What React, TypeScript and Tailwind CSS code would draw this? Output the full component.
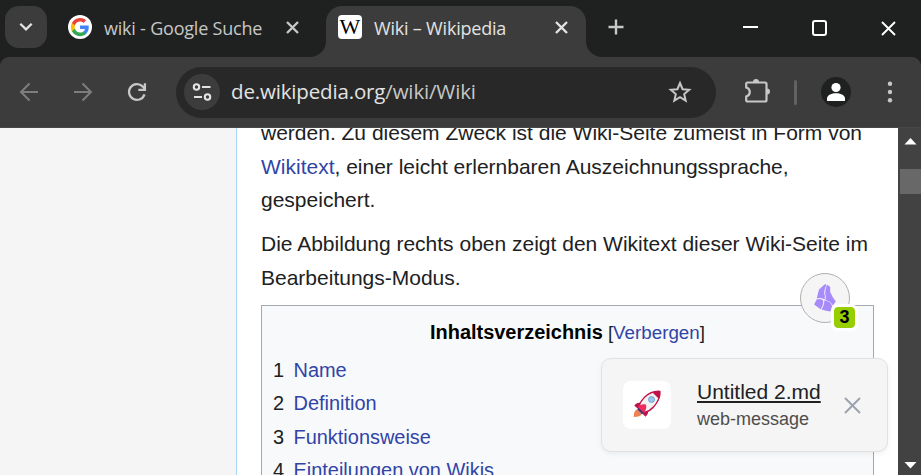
import React from 'react';

const chromeFont = "font-['Open_Sans','Noto_Sans',sans-serif]";

function CloseGlyph({ size, color, width }: { size: number; color: string; width: number }) {
  return (
    <svg width={size} height={size} viewBox={`0 0 ${size} ${size}`} className="shrink-0" fill="none" stroke={color} strokeWidth={width}>
      <path d={`M1 1L${size - 1} ${size - 1}M${size - 1} 1L1 ${size - 1}`} />
    </svg>
  );
}

function GoogleIcon() {
  return (
    <svg width="24" height="24" viewBox="0 0 24 24" className="shrink-0">
      <circle cx="12" cy="12" r="12" fill="#fff" />
      <g transform="translate(2.9 2.9) scale(0.76)">
        <path fill="#4285f4" d="M23.5 12.3c0-.9-.1-1.500-.2-2.300H12v4.500h6.500c-.3 1.500-1.200 2.800-2.500 3.600v3h3.900c2.300-2.100 3.600-5.200 3.600-8.800z" />
        <path fill="#34a853" d="M12 24c3.200 0 6-1.100 7.900-2.900l-3.900-3c-1.100.7-2.400 1.200-4 1.200-3.100 0-5.800-2.100-6.700-4.900H1.300v3.100C3.300 21.400 7.300 24 12 24z" />
        <path fill="#fbbc05" d="M5.300 14.400a7.200 7.200 0 0 1 0-4.700V6.600h-4a12 12 0 0 0 0 10.900z" />
        <path fill="#ea4335" d="M12 4.800c1.800 0 3.300.6 4.600 1.800L20 3.200A12 12 0 0 0 1.300 6.600l4 3.100C6.200 6.900 8.900 4.800 12 4.800z" />
      </g>
    </svg>
  );
}

function TabStrip() {
  return (
    <div className="flex h-[57px] items-start bg-[#1f2120]">
      <button className="ml-[5px] mt-[6px] flex h-[42px] w-[42px] shrink-0 items-center justify-center rounded-[14px] bg-[#3c3c3c]">
        <svg width="14" height="10" viewBox="0 0 14 10" fill="none" stroke="#e3e3e3" strokeWidth="2.3">
          <path d="M1.300 1.800L7 7.400L12.700 1.800" />
        </svg>
      </button>
      <div className="ml-[21px] mt-[6px] flex h-[42px] w-[242px] shrink-0 items-center text-[#c7c7c7]">
        <GoogleIcon />
        <span className="ml-3 mt-[3px] w-[182px] whitespace-nowrap text-[18px] tracking-[-0.21px]">wiki - Google Suche</span>
        <CloseGlyph size={13} color="#c7c7c7" width={2.4} />
      </div>
      <svg width="16" height="16" viewBox="0 0 16 16" className="mt-[41px] shrink-0" fill="#3c3c3c">
        <path d="M0 16A16 16 0 0 0 16 0V16Z" />
      </svg>
      <div className="mt-[6px] flex h-[51px] w-[260px] shrink-0 items-start rounded-t-[16px] bg-[#3c3c3c] pl-3 text-[#e3e3e3]">
        <div className="flex h-[42px] items-center">
          <span className="flex h-6 w-6 shrink-0 items-center justify-center overflow-hidden rounded-[4px] bg-white font-['Liberation_Serif',serif] text-[22px] leading-6 text-black">
            W
          </span>
          <span className="ml-3 mt-[3px] w-[181px] whitespace-nowrap text-[18px] tracking-[-0.2px]">Wiki – Wikipedia</span>
          <CloseGlyph size={13} color="#e3e3e3" width={2.4} />
        </div>
      </div>
      <svg width="16" height="16" viewBox="0 0 16 16" className="mt-[41px] shrink-0" fill="#3c3c3c">
        <path d="M16 16A16 16 0 0 1 0 0V16Z" />
      </svg>
      <svg width="16" height="16" viewBox="0 0 16 16" className="ml-[6px] mt-[19px] shrink-0" stroke="#c7c7c7" strokeWidth="2.4">
        <path d="M8 .5V15.500M.5 8H15.500" />
      </svg>
      <span className="ml-[119px] mt-[26px] h-[2px] w-[15px] shrink-0 bg-white" />
      <span className="ml-[54px] mt-[20px] h-[16px] w-[15px] shrink-0 rounded-[3px] border-2 border-white" />
      <div className="ml-[54px] mt-[21px]">
        <CloseGlyph size={15} color="#fff" width={1.9} />
      </div>
    </div>
  );
}

function Toolbar() {
  return (
    <div className="bg-[#1f2120]">
      <div className="flex h-[71px] items-center rounded-t-[9px] border-b border-[#4a4747] bg-[#3c3c3c]">
        <svg width="20" height="20" viewBox="0 0 20 20" className="ml-[19px] shrink-0" fill="none" stroke="#7d7d7d" strokeWidth="2">
          <path d="M19 10H2.500M10.500 1.500L2 10L10.500 18.500" />
        </svg>
        <svg width="20" height="20" viewBox="0 0 20 20" className="ml-[34px] shrink-0" fill="none" stroke="#7d7d7d" strokeWidth="2">
          <path d="M1 10H17.500M9.500 1.500L18 10L9.500 18.500" />
        </svg>
        <svg width="20" height="20" viewBox="0 0 20 20" className="ml-[34px] shrink-0" fill="none" stroke="#c7c7c7" strokeWidth="2.3">
          <path d="M17.500 12.300A7.900 7.900 0 1 1 15.600 4.400L17.800 6.800" />
          <path d="M17.900 1.300V7.800H11.300" />
        </svg>
        <div className="ml-[29px] flex h-[51px] w-[540px] shrink-0 items-center rounded-full bg-[#282828] pl-2">
          <span className="flex h-9 w-9 shrink-0 items-center justify-center rounded-full bg-[#3c3c3c]">
            <svg width="20" height="20" viewBox="0 0 20 20" fill="none" stroke="#e3e3e3" strokeWidth="2.100">
              <circle cx="4.500" cy="5" r="2.700" />
              <path d="M10 5H18.500M2 15H10" />
              <circle cx="15.500" cy="15" r="2.700" />
            </svg>
          </span>
          <span className="-mt-[2px] ml-[11px] w-[437px] whitespace-nowrap text-[20.5px] tracking-[-0.16px] text-[#e3e3e3]">
            de.wikipedia.org<span className="text-[#c7c7c7]">/wiki/Wiki</span>
          </span>
          <svg width="24" height="24" viewBox="0 0 24 24" className="shrink-0" fill="none" stroke="#c7c7c7" strokeWidth="2">
            <path d="M12 3L14.600 9.200L21.200 9.700L16.200 14.100L17.700 20.700L12 17.200L6.300 20.700L7.800 14.100L2.800 9.700L9.400 9.200Z" />
          </svg>
        </div>
        <svg width="26" height="26" viewBox="0 0 26 26" className="-mt-[2px] ml-[28px] shrink-0" fill="none">
          <path d="M3.500 4.500H21A1.500 1.500 0 0 1 22.500 6V22A1.500 1.500 0 0 1 21 23.500H3.500A1.300 1.300 0 0 1 2.200 22.200V18.500C7 17 7 11 2.200 9.500V6A1.400 1.400 0 0 1 3.500 4.500Z" stroke="#c7c7c7" strokeWidth="2.200" />
          <path d="M9 4A3 3 0 0 1 15 4ZM23 10.500A3 3 0 0 1 23 16.500Z" fill="#c7c7c7" />
        </svg>
        <span className="ml-[24px] h-[25px] w-[3px] shrink-0 rounded-full bg-[#626262]" />
        <svg width="30" height="30" viewBox="0 0 30 30" className="ml-[24px] shrink-0">
          <circle cx="15" cy="15" r="15" fill="#1f2120" />
          <circle cx="15" cy="10.500" r="4.600" fill="#fff" />
          <path d="M6 24V21.500C6 18 11 16.300 15 16.300S24 18 24 21.500V24Z" fill="#fff" />
        </svg>
        <svg width="6" height="24" viewBox="0 0 6 24" className="ml-[36px] shrink-0" fill="#c7c7c7">
          <circle cx="3" cy="3.700" r="2.200" />
          <circle cx="3" cy="12" r="2.200" />
          <circle cx="3" cy="20.300" r="2.200" />
        </svg>
      </div>
    </div>
  );
}

const chapters = ['Name', 'Definition', 'Funktionsweise', 'Einteilungen von Wikis'];

function Article() {
  return (
    <main className="h-[347px] w-[662px] shrink-0 overflow-hidden border-l border-[#a7d7f9] bg-white pl-6 text-[21px] leading-[33.6px] text-[#202122]">
      <div className="-mt-[12px] whitespace-nowrap">
        <p>
          werden. Zu diesem Zweck ist die Wiki-Seite zumeist in Form von
          <br />
          <a className="text-[#3044a8]">Wikitext</a>, einer leicht erlernbaren Auszeichnungssprache,
          <br />
          gespeichert.
        </p>
        <p className="mt-[10.5px]">
          Die Abbildung rechts oben zeigt den Wikitext dieser Wiki-Seite im
          <br />
          Bearbeitungs-Modus.
        </p>
      </div>
      <section className="mt-[10.5px] h-[300px] w-[613px] border border-[#a2a9b1] bg-[#f8f9fa] pl-[11px] pt-[10px] text-[19.95px]">
        <h2 className="pr-[11px] text-center leading-[32px]">
          <b className="text-black">Inhaltsverzeichnis</b>
          <span className="ml-[5px] text-[18.8px]">
            [<a className="text-[#3044a8]">Verbergen</a>]
          </span>
        </h2>
        <ol className="mt-[5px]">
          {chapters.map((c, i) => (
            <li key={c} className="flex h-[33.500px] items-center">
              <span className="w-[20.5px]">{i + 1}</span>
              <a className="text-[#3044a8]">{c}</a>
            </li>
          ))}
        </ol>
      </section>
    </main>
  );
}

function Scrollbar() {
  return (
    <div className="flex h-[347px] w-[23px] flex-col items-end bg-[#424242]">
      <svg width="21" height="41" viewBox="0 0 21 41" fill="#fff">
        <path d="M4.500 16.500L10.500 10L16.500 16.500Z" />
      </svg>
      <span className="h-[25px] w-[21px] bg-[#686868]" />
      <svg width="21" height="20" viewBox="0 0 21 20" fill="#fff" className="mt-auto">
        <path d="M4.500 7L10.500 13.500L16.500 7Z" />
      </svg>
    </div>
  );
}

function VaultButton() {
  return (
    <div className="absolute left-[800px] top-[273px] flex h-[50px] w-[50px] items-center justify-center rounded-full border border-[#b0b0b0] bg-[#f5f5f5]">
      <svg width="22" height="28" viewBox="0 0 22 28" className="-mt-px" fill="#a78bfa">
        <path d="M5 5.600L10.500 .6Q12.300 -.4 12.200 1.200Q10 5.500 10.300 9.500Q11.300 12.500 10.500 15.500Q7 13.500 2.800 14.400Q3.800 10 5 5.600Z" />
        <path d="M13 .6L16.200 3V8Q18 12.500 21.800 17.500L18.800 21.600Q16.500 16.800 11.300 15.900Q12.300 12.500 11.200 9.500Q11 5.500 13 .6Z" />
        <path d="M2.600 15.400Q8 14.200 9.200 16.800Q9.700 20.500 6.600 25.200L.1 20.500Z" />
        <path d="M10.200 16.600Q16.500 17 18.200 22.200L16.500 27.600Q12 26.800 7.400 25.500Q10.700 21 10.200 16.600Z" />
      </svg>
      <span className="absolute left-[30px] top-[30px] flex h-[27px] w-[27px] items-center justify-center rounded-[7px] border-[3px] border-white bg-[#96ce00] bg-clip-padding pb-px text-[18px] font-bold leading-none text-black">
        3
      </span>
    </div>
  );
}

function Toast() {
  return (
    <div className="absolute left-[601px] top-[358px] flex h-[94px] w-[287px] items-center rounded-[10px] border border-[#e2e2e2] bg-[#f5f5f5] pl-[21px] shadow-[0_2px_5px_rgba(0,0,0,0.06)]">
      <div className="flex h-12 w-12 shrink-0 items-center justify-center rounded-[8px] bg-white">
        <svg width="28" height="28" viewBox="0 0 28 28" className="-mt-[3px]">
          <path d="M4 19.500Q.3 21 .8 27Q7.500 27 8.800 24Z" fill="#ee8252" />
          <path d="M8.500 12.500Q3 12.500 1.300 15.800L6 19.500ZM15.500 20Q15.500 24 12.600 26.800L8.300 22.500Z" fill="#be1248" />
          <path d="M4.200 19.500L9 24.300L13 21.500L7 15.500Z" fill="#4c366f" />
          <path d="M26.800 1.300Q27.500 9 21 16.500Q17 21 11.500 22.500L5.500 17Q7 11.500 11.500 7.200Q18 .8 26.800 1.300Z" fill="#f3f2f3" stroke="#be1248" strokeWidth="1.300" />
          <path d="M27 1Q28 6 26 9L19.500 2.500Q23 .5 27 1Z" fill="#be1248" />
          <path d="M5 17.300Q7 13.500 13 14.500Q14 19 11 22.800Z" fill="#f02c5e" />
          <circle cx="18.500" cy="9.500" r="3" fill="#92c8f5" stroke="#6e91b5" strokeWidth=".8" />
        </svg>
      </div>
      <div className="ml-[26px] w-[147px] whitespace-nowrap pt-[2px]">
        <div className="text-[21px] leading-[26px] text-[#202122] underline decoration-2 underline-offset-[2px]">Untitled 2.md</div>
        <div className="text-[18px] leading-[28px] text-[#4d4d4d]">web-message</div>
      </div>
      <CloseGlyph size={17} color="#9ca3af" width={2} />
    </div>
  );
}

export default function App() {
  return (
    <div className="relative h-[475px] w-[921px] overflow-hidden bg-[#f5f5f5] font-['Liberation_Sans',Arial,sans-serif]">
      <header className={chromeFont}>
        <TabStrip />
        <Toolbar />
      </header>
      <div className="flex h-[347px]">
        <aside className="w-[236px] shrink-0 bg-[#f5f5f5]" />
        <Article />
        <Scrollbar />
      </div>
      <VaultButton />
      <Toast />
    </div>
  );
}
